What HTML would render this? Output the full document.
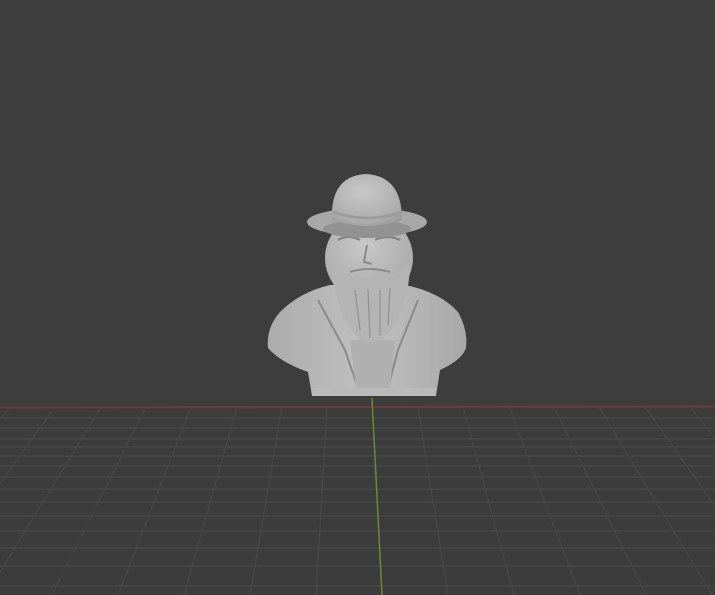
<!DOCTYPE html>
<html><head><style>html,body{margin:0;padding:0;background:#3d3d3d;overflow:hidden}svg{display:block}</style></head>
<body>
<svg width="715" height="595" viewBox="0 0 715 595" xmlns="http://www.w3.org/2000/svg">
<defs>
<radialGradient id="g" cx="0.45" cy="0.35" r="0.8">
<stop offset="0" stop-color="#c8c8c8"/><stop offset="0.7" stop-color="#adadad"/><stop offset="1" stop-color="#939393"/>
</radialGradient>
<linearGradient id="body" x1="0" y1="0" x2="1" y2="0">
<stop offset="0" stop-color="#acacac"/><stop offset="0.5" stop-color="#c0c0c0"/><stop offset="1" stop-color="#a8a8a8"/>
</linearGradient>
</defs>
<rect width="715" height="595" fill="#3d3d3d"/>
<rect y="407" width="715" height="188" fill="#3c3c3c"/>
<g stroke="#484848" stroke-width="1.2" fill="none">
<line x1="0" y1="418" x2="715" y2="418"/>
<line x1="0" y1="428" x2="715" y2="428"/>
<line x1="0" y1="439" x2="715" y2="439"/><line x1="0" y1="447" x2="715" y2="447"/>
<line x1="0" y1="456" x2="715" y2="456"/><line x1="0" y1="466" x2="715" y2="466"/>
<line x1="0" y1="477" x2="715" y2="477"/><line x1="0" y1="489" x2="715" y2="489"/>
<line x1="0" y1="502" x2="715" y2="502"/><line x1="0" y1="516" x2="715" y2="516"/>
<line x1="0" y1="531" x2="715" y2="531"/><line x1="0" y1="548" x2="715" y2="548"/>
<line x1="0" y1="566" x2="715" y2="566"/><line x1="0" y1="586" x2="715" y2="586"/>
<line x1="448" y1="595" x2="418" y2="407"/><line x1="514" y1="595" x2="463" y2="407"/>
<line x1="580" y1="595" x2="509" y2="407"/><line x1="646" y1="595" x2="554" y2="407"/>
<line x1="712" y1="595" x2="599" y2="407"/><line x1="778" y1="595" x2="645" y2="407"/>
<line x1="844" y1="595" x2="690" y2="407"/><line x1="910" y1="595" x2="735" y2="407"/>
<line x1="316" y1="595" x2="327" y2="407"/><line x1="250" y1="595" x2="282" y2="407"/>
<line x1="184" y1="595" x2="237" y2="407"/><line x1="118" y1="595" x2="191" y2="407"/>
<line x1="52" y1="595" x2="146" y2="407"/><line x1="-14" y1="595" x2="101" y2="407"/>
<line x1="-80" y1="595" x2="55" y2="407"/><line x1="-146" y1="595" x2="10" y2="407"/>
</g>
<line x1="0" y1="407.5" x2="715" y2="406.5" stroke="#6a3c42" stroke-width="2"/>
<line x1="372" y1="398" x2="382" y2="595" stroke="#6e8a2a" stroke-width="1.5"/>
<path d="M280 312 Q300 292 330 285 L405 285 Q440 292 458 312 Q468 330 466 348 Q462 360 440 370 L436 396 L312 396 L308 372 Q280 362 268 348 Q266 328 280 312 Z" fill="url(#body)"/>
<path d="M312 396 L436 396 L436 388 L312 388 Z" fill="#bababa"/>
<path d="M318 300 L345 350 L358 388" stroke="#8a8a8a" stroke-width="2" fill="none"/>
<path d="M418 300 L398 350 L388 388" stroke="#8a8a8a" stroke-width="2" fill="none"/>
<path d="M350 340 L395 340 L390 388 L356 388 Z" fill="#b0b0b0"/>
<ellipse cx="369" cy="258" rx="44" ry="44" fill="url(#g)"/>
<path d="M330 265 Q335 300 348 325 Q360 345 372 342 Q388 340 398 318 Q410 292 410 262 Q395 278 370 278 Q345 278 330 265 Z" fill="#b4b4b4"/>
<path d="M355 290 L360 330 M368 290 L370 338 M380 290 L380 335 M390 288 L388 325" stroke="#8f8f8f" stroke-width="1.2"/>
<path d="M338 240 Q348 234 360 240 M375 240 Q388 234 400 240" stroke="#7f7f7f" stroke-width="2" fill="none"/>
<path d="M367 245 L364 262 L372 264" stroke="#8a8a8a" stroke-width="2" fill="none"/>
<path d="M350 272 Q368 266 390 272" stroke="#8a8a8a" stroke-width="2" fill="none"/>
<ellipse cx="367" cy="222" rx="60" ry="14" fill="#a8a8a8"/>
<ellipse cx="367" cy="229" rx="44" ry="9" fill="#929292"/>
<path d="M332 220 Q330 176 366 174 Q402 176 402 220 Q367 232 332 220 Z" fill="url(#g)"/>
<path d="M333 212 Q367 224 402 212" stroke="#9c9c9c" stroke-width="3" fill="none"/>
</svg>
</body></html>
